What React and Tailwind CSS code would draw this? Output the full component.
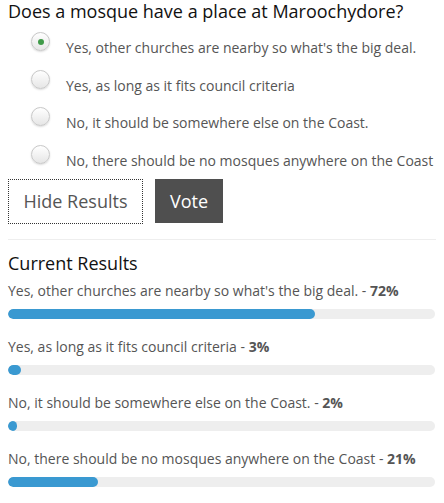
import React from "react";

const options = [
  "Yes, other churches are nearby so what's the big deal.",
  "Yes, as long as it fits council criteria",
  "No, it should be somewhere else on the Coast.",
  "No, there should be no mosques anywhere on the Coast",
];

const results = [
  { label: "Yes, other churches are nearby so what's the big deal.", pct: 72 },
  { label: "Yes, as long as it fits council criteria", pct: 3 },
  { label: "No, it should be somewhere else on the Coast.", pct: 2 },
  { label: "No, there should be no mosques anywhere on the Coast", pct: 21 },
];

function Radio({ checked }) {
  return (
    <span className="relative flex h-[19px] w-[19px] shrink-0 items-center justify-center rounded-full border border-[#c8c8c8] bg-gradient-to-b from-[#ffffff] to-[#e6e6e6] shadow-[0_1px_2px_rgba(0,0,0,0.15)]">
      {checked && <span className="h-[6px] w-[6px] rounded-full bg-[#3f9a48]" />}
    </span>
  );
}

export default function App() {
  return (
    <div
      className="w-[444px] h-[503px] overflow-hidden bg-white px-2 text-[#555555]"
      style={{ fontFamily: '"Open Sans", sans-serif' }}
    >
      <h1 className="text-[18px] leading-[22px] text-[#111111] pt-0">
        Does a mosque have a place at Maroochydore?
      </h1>
      <div className="ml-[23px] mt-[10px]">
        {options.map((o, i) => (
          <div key={i} className="flex h-[37.5px] items-start">
            <Radio checked={i === 0} />
            <span className="ml-[16px] mt-[6px] whitespace-nowrap text-[14px] leading-[20px]">{o}</span>
          </div>
        ))}
      </div>
      <div className="mt-[-3px] flex gap-3">
        <button className="h-[45px] w-[135px] border border-dotted border-[#333] bg-white text-[18px] text-[#555555]">
          Hide Results
        </button>
        <button className="h-[44px] w-[68px] bg-[#4f4f4f] text-[18px] text-white">
          Vote
        </button>
      </div>
      <div className="mt-[15px] h-px w-[428px] bg-[#eeeeee]" />
      <h2 className="mt-[12px] text-[18px] leading-[22px] text-[#111111]">Current Results</h2>
      <div className="mt-[7px]">
        {results.map((r, i) => (
          <div key={i} className="mb-[18px]">
            <div className="whitespace-nowrap text-[14px] leading-[20px]">
              {r.label} - <b className="font-bold">{r.pct}%</b>
            </div>
            <div className="mt-[8px] h-[10px] w-[427px] overflow-hidden rounded-full bg-[#eeeeee]">
              <div className="h-full rounded-full bg-[#3a99d1]" style={{ width: `${Math.max(r.pct, 2)}%` }} />
            </div>
          </div>
        ))}
      </div>
    </div>
  );
}
